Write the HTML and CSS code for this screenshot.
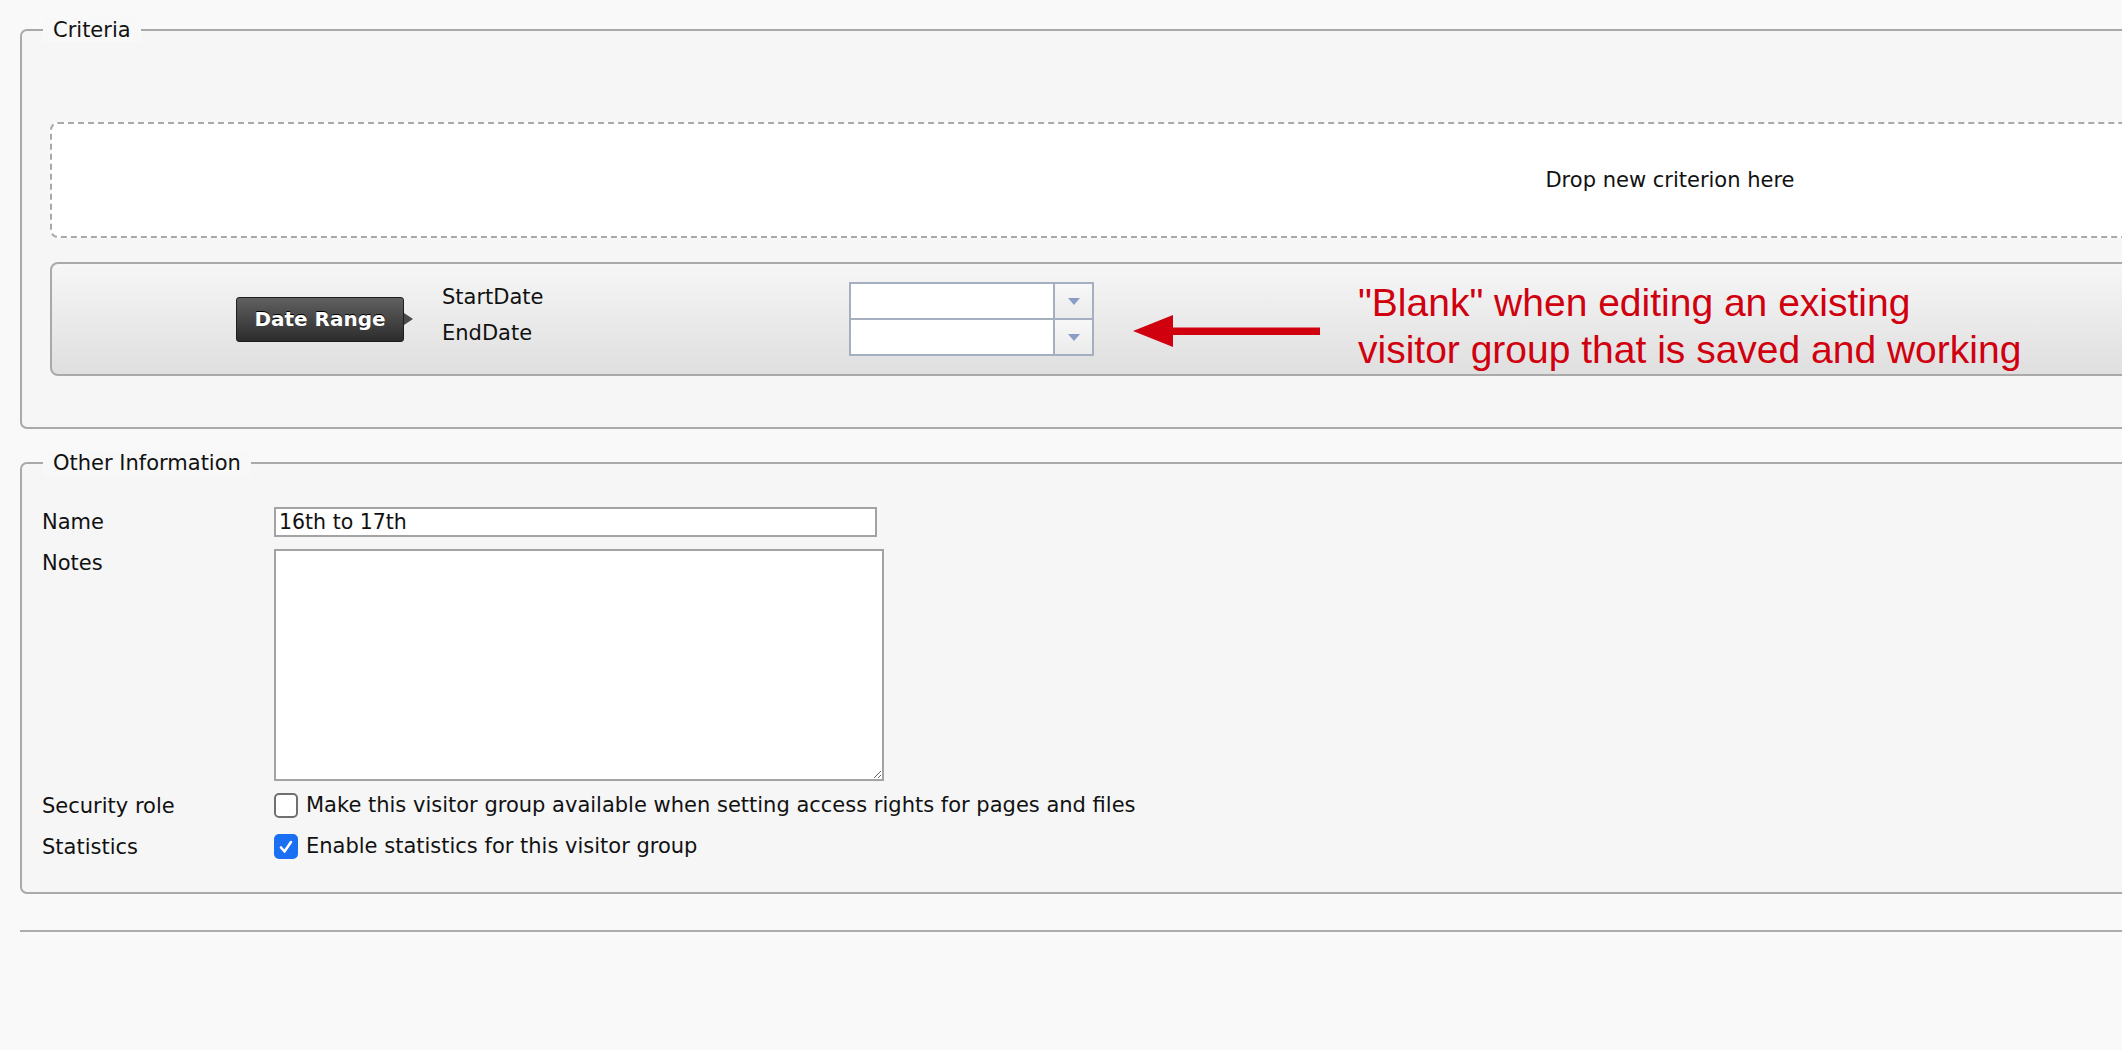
FILE: index.html
```html
<!DOCTYPE html>
<html lang="en">
<head>
    <meta charset="UTF-8">
    <title>Visitor group - Date Range</title>
    <link rel="stylesheet" href="styles.css">
</head>
<body>
    <div class="page">
        <fieldset class="group criteria">
            <legend>Criteria</legend>
            <div class="drop-zone">Drop new criterion here</div>

            <div class="criterion">
                <div class="model-name">Date Range</div>
                <div class="crit-labels">
                    <div>StartDate</div>
                    <div>EndDate</div>
                </div>
                <div class="crit-inputs">
                    <div class="date-select">
                        <span class="date-value"></span>
                        <span class="date-btn"><span class="tri"></span></span>
                    </div>
                    <div class="date-select">
                        <span class="date-value"></span>
                        <span class="date-btn"><span class="tri"></span></span>
                    </div>
                </div>

                <!-- annotation drawn over the screenshot -->
                <svg class="note-arrow" width="188" height="32" viewBox="0 0 188 32">
                    <polygon points="0,16 40,0 40,32" fill="#d0000f"/>
                    <rect x="38" y="12.5" width="149" height="7.5" fill="#d0000f"/>
                </svg>
                <p class="note-text">"Blank" when editing an existing<br>visitor group that is saved and working</p>
            </div>
        </fieldset>

        <fieldset class="group other">
            <legend>Other Information</legend>
            <div class="form-grid">
                <label class="lbl" for="name">Name</label>
                <input class="text-field" id="name" type="text" value="16th to 17th">

                <label class="lbl lbl-top" for="notes">Notes</label>
                <textarea class="notes" id="notes"></textarea>

                <div class="lbl">Security role</div>
                <div class="check-row">
                    <span class="box"></span>
                    Make this visitor group available when setting access rights for pages and files
                </div>

                <div class="lbl stats">Statistics</div>
                <div class="check-row stats">
                    <span class="box checked">
                        <svg width="16" height="16" viewBox="0 0 16 16">
                            <path d="M3 8.5 L6.5 12.5 L13 3" fill="none" stroke="#fff" stroke-width="2.6" stroke-linecap="round" stroke-linejoin="round"/>
                        </svg>
                    </span>
                    Enable statistics for this visitor group
                </div>
            </div>
        </fieldset>

        <hr class="rule">
    </div>
</body>
</html>
```

FILE: styles.css
```css
html, body {
    margin: 0;
    overflow: hidden;
    background-color: #f9f9f9;
}

body {
    font-family: "DejaVu Sans", sans-serif;
    font-size: 21px;
    color: #111;
}

.page {
    width: 3300px;
    padding-left: 20px;
}

.group {
    margin: 0;
    padding: 0;
    min-width: 0;
    border: 2px solid #a9a9a9;
    border-radius: 7px;
    background-color: #f6f6f6;
}

.group legend {
    margin-left: 21px;
    padding: 0 10px;
    line-height: 24px;
    background-color: #f8f8f8;
}

.criteria {
    margin-top: 18px;
    padding-bottom: 51px;
}

.drop-zone {
    margin: 80px 28px 0 28px;
    height: 112px;
    border: 2px dashed #a9a9a9;
    border-radius: 8px;
    background-color: #fff;
    display: flex;
    align-items: center;
    justify-content: center;
}

.criterion {
    position: relative;
    margin: 24px 28px 0 28px;
    height: 110px;
    padding-left: 184px;
    border: 2px solid #a9a9a9;
    border-radius: 8px;
    background: linear-gradient(#f6f6f6, #dfdfdf);
    display: flex;
    align-items: center;
}

.model-name {
    position: relative;
    box-sizing: border-box;
    width: 168px;
    height: 45px;
    background: linear-gradient(#606060, #2c2c2c);
    border: 1px solid #1e1e1e;
    border-radius: 3px;
    color: #fff;
    font-weight: bold;
    font-size: 20px;
    display: flex;
    align-items: center;
    justify-content: center;
    text-shadow: 0 -1px 0 #000;
}

.model-name::after {
    content: "";
    position: absolute;
    right: -10px;
    top: 50%;
    margin-top: -6px;
    border-left: 9px solid #4a4a4a;
    border-top: 6px solid transparent;
    border-bottom: 6px solid transparent;
}

.crit-labels {
    margin-left: 38px;
    margin-bottom: 8px;
    width: 407px;
    line-height: 36px;
}

.crit-inputs {
    display: flex;
    flex-direction: column;
}

.date-select {
    box-sizing: border-box;
    width: 245px;
    height: 38px;
    border: 2px solid #a5afc0;
    display: flex;
}

.date-select + .date-select {
    margin-top: -2px;
}

.date-value {
    flex: 1;
    background-color: #fff;
}

.date-btn {
    width: 37px;
    border-left: 2px solid #a5afc0;
    background: linear-gradient(#f8f8f8, #ebebeb);
    display: flex;
    align-items: center;
    justify-content: center;
}

.tri {
    border-top: 7px solid #8b9dc5;
    border-left: 6px solid transparent;
    border-right: 6px solid transparent;
}

.note-arrow {
    position: absolute;
    left: 1081px;
    top: 51px;
}

.note-text {
    position: absolute;
    left: 1306px;
    top: 15px;
    margin: 0;
    font-family: "Liberation Sans", Arial, sans-serif;
    font-size: 39px;
    line-height: 47px;
    color: #d0000f;
    white-space: nowrap;
}

.other {
    margin-top: 22px;
}

.form-grid {
    display: grid;
    grid-template-columns: 232px auto;
    row-gap: 12px;
    padding: 32px 0 33px 20px;
    justify-items: start;
}

.lbl {
    align-self: center;
    line-height: 24px;
}

.lbl-top {
    align-self: start;
    margin-top: 2px;
}

.text-field {
    box-sizing: border-box;
    width: 603px;
    height: 30px;
    margin: 0;
    padding: 0 3px;
    border: 2px solid #a3a3a3;
    background-color: #fff;
    font-family: "DejaVu Sans", sans-serif;
    font-size: 20.5px;
    color: #111;
}

.notes {
    box-sizing: border-box;
    width: 610px;
    height: 232px;
    margin: 0;
    border: 2px solid #a3a3a3;
    background-color: #fff;
    font-family: "DejaVu Sans", sans-serif;
    font-size: 20.5px;
}

.check-row {
    display: flex;
    align-items: center;
    gap: 8px;
    line-height: 25px;
}

.stats {
    margin-top: 4px;
}

.box {
    box-sizing: border-box;
    width: 24px;
    height: 25px;
    border: 2px solid #707070;
    border-radius: 5px;
    background-color: #fff;
    display: flex;
    align-items: center;
    justify-content: center;
}

.box.checked {
    border-color: #1a6ff2;
    background-color: #1a6ff2;
}

.rule {
    margin: 36px 0 0 0;
    height: 0;
    border: 0;
    border-top: 2px solid #acacac;
}
```
